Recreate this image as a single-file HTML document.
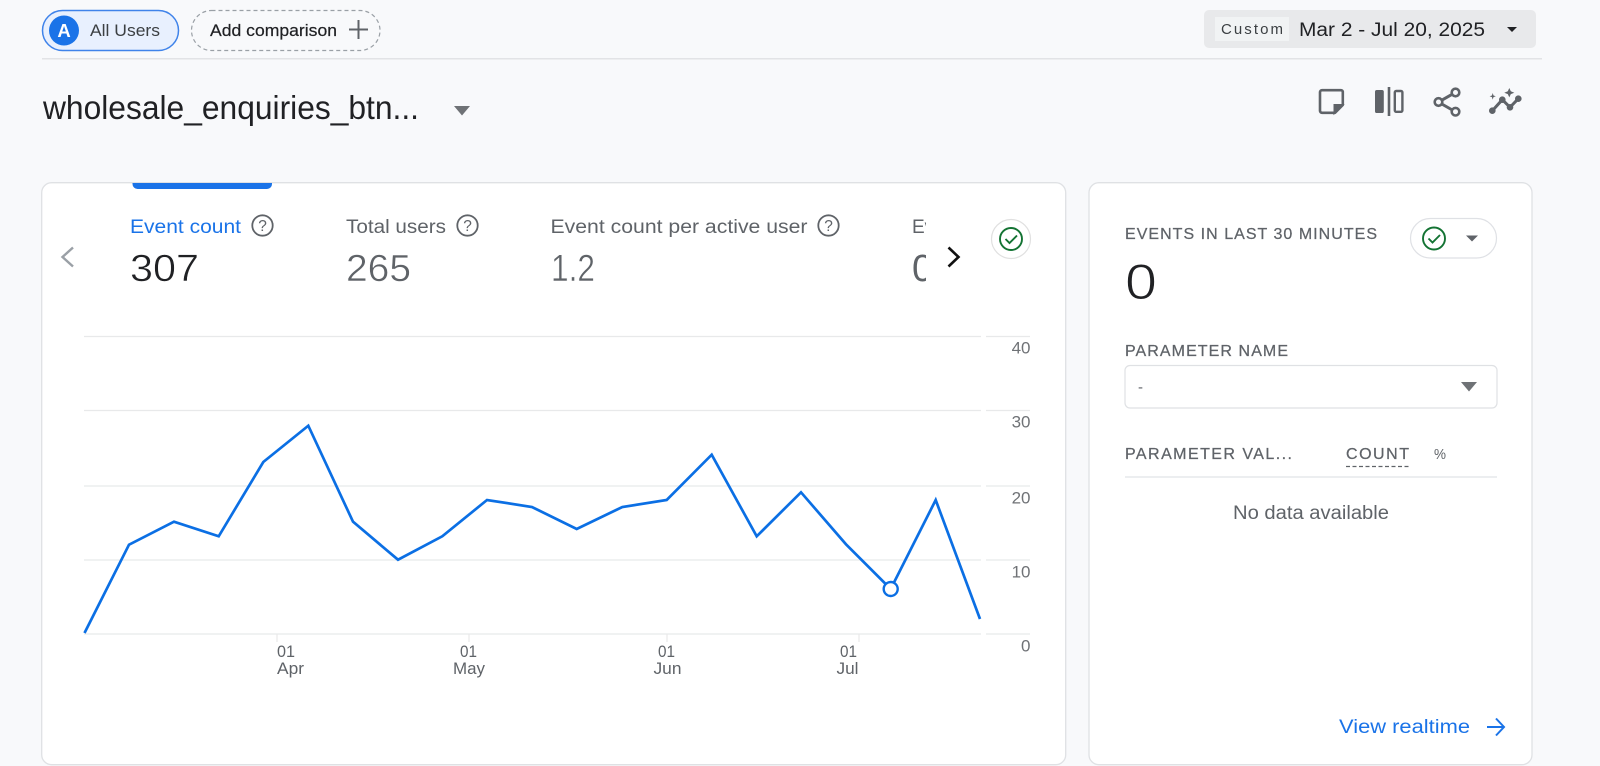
<!DOCTYPE html>
<html lang="en"><head><meta charset="utf-8"><title>Event report</title>
<style>
html,body{margin:0;padding:0;width:1600px;height:766px;overflow:hidden;background:#f8f9fb}
svg{display:block}
text{font-family:"Liberation Sans",sans-serif}
</style></head><body>
<svg xmlns="http://www.w3.org/2000/svg" width="1600" height="766" viewBox="0 0 1600 766">
<rect width="1600" height="766" fill="#f8f9fb"/>

<!-- top chips -->
<rect x="42.5" y="10.5" width="136" height="40" rx="20" fill="#e8f0fe" stroke="#3f83ea" stroke-width="1.5"/>
<circle cx="64" cy="30.5" r="15" fill="#1a73e8"/>
<text x="64" y="37" font-size="18.5" font-weight="bold" fill="#fff" text-anchor="middle">A</text>
<text x="90" y="36" font-size="17" fill="#3c4043" textLength="70" lengthAdjust="spacingAndGlyphs">All Users</text>
<rect x="191.5" y="10.5" width="188.500" height="40" rx="20" fill="none" stroke="#9aa0a6" stroke-width="1.2" stroke-dasharray="4 3"/>
<text x="210" y="36" font-size="17" fill="#202124" stroke="#202124" stroke-width=".2" textLength="127" lengthAdjust="spacingAndGlyphs">Add comparison</text>
<path d="M358.5 20v19M349 29.500h19" stroke="#5f6368" stroke-width="2" fill="none"/>

<!-- date -->
<rect x="1204" y="10" width="332" height="38" rx="5" fill="#e8e9eb"/>
<rect x="1215" y="17" width="74" height="24" fill="#f1f3f4"/>
<text x="1221" y="34" font-size="15" fill="#3c4043" textLength="62" lengthAdjust="spacing">Custom</text>
<text x="1299" y="36" font-size="19" fill="#202124" textLength="186" lengthAdjust="spacingAndGlyphs">Mar 2 - Jul 20, 2025</text>
<path d="M1507 27h10l-5 5z" fill="#202124"/>
<rect x="42" y="58" width="1500" height="1.5" fill="#e2e3e6"/>

<!-- title -->
<text x="43" y="119" font-size="33" fill="#202124" textLength="376" lengthAdjust="spacingAndGlyphs">wholesale_enquiries_btn...</text>
<path d="M454 106h16l-8 9.500z" fill="#6f7276"/>

<!-- action icons -->
<g fill="none" stroke="#5f6368" stroke-width="2.600">
<path d="M1322 90.200h19a1.800 1.800 0 0 1 1.800 1.800v13l-7.800 7.800h-13a2 2 0 0 1-2-2v-18.600a2 2 0 0 1 2-2z" stroke-linejoin="round"/>
<path d="M1343.500 104.500h-9.500v9.500z" fill="#5f6368" stroke-width="1"/>
<rect x="1394.800" y="91" width="7.600" height="20.800" rx="1.400" stroke-width="2.400"/>
<circle cx="1455.500" cy="92.500" r="3.800"/><circle cx="1455.500" cy="111.700" r="3.800"/><circle cx="1438.500" cy="102" r="3.800"/>
<path d="M1441.800 100.200l10.500-6M1441.800 104l10.500 6" stroke-width="3"/>
<path d="M1492.300 110.700l10-11 7.700 7.600 8.300-8.600" stroke-width="3"/>
</g>
<g fill="#5f6368">
<rect x="1375" y="90" width="8.800" height="23" rx="1.800"/>
<rect x="1387.700" y="87" width="2.600" height="29"/>
<circle cx="1492.300" cy="110.700" r="3.300"/><circle cx="1502.300" cy="99.700" r="3.300"/><circle cx="1510" cy="107.300" r="3.300"/><circle cx="1518.300" cy="98.700" r="3.300"/>
<path d="M1509.300 88l1.500 3.300 3.500 1.400-3.500 1.400-1.500 3.300-1.500-3.300-3.500-1.400 3.500-1.400z"/>
<path d="M1492.700 93l.8 2.500 2.300.8-2.300.8-.8 2.500-.8-2.500-2.300-.8 2.300-.8z"/>
</g>

<!-- main card -->
<rect x="41.700" y="182.700" width="1024" height="582" rx="10" fill="#fff" stroke="#dfe1e4" stroke-width="1.300"/>
<path d="M132.500 183h139.500v1a5 5 0 0 1-5 5h-129.500a5 5 0 0 1-5-5z" fill="#1a73e8"/>

<text x="130" y="233" font-size="19" fill="#1a73e8" textLength="111" lengthAdjust="spacingAndGlyphs">Event count</text>
<text x="130" y="281" font-size="38" fill="#202124" stroke="#fff" stroke-width=".5" textLength="69" lengthAdjust="spacingAndGlyphs">307</text>
<text x="346" y="233" font-size="19" fill="#5f6368" textLength="100" lengthAdjust="spacingAndGlyphs">Total users</text>
<text x="346" y="281" font-size="38" fill="#5f6368" stroke="#fff" stroke-width=".5" textLength="65" lengthAdjust="spacingAndGlyphs">265</text>
<text x="550.500" y="233" font-size="19" fill="#5f6368" textLength="257" lengthAdjust="spacingAndGlyphs">Event count per active user</text>
<text x="551" y="281" font-size="38" fill="#5f6368" stroke="#fff" stroke-width=".5" textLength="44" lengthAdjust="spacingAndGlyphs">1.2</text>
<clipPath id="c"><rect x="905" y="205" width="21" height="90"/></clipPath>
<g clip-path="url(#c)">
<text x="912" y="233" font-size="19" fill="#5f6368">Ev</text>
<text x="912" y="281" font-size="38" fill="#5f6368">0</text>
</g>
<g fill="none" stroke="#5f6368" stroke-width="1.800">
<circle cx="262.500" cy="225.500" r="10.200"/><circle cx="467.500" cy="225.500" r="10.200"/><circle cx="828.500" cy="225.500" r="10.200"/>
</g>
<g font-size="15.500" fill="#5f6368" text-anchor="middle">
<text x="262.500" y="231">?</text><text x="467.500" y="231">?</text><text x="828.500" y="231">?</text>
</g>
<path d="M73 247.500l-10.500 9.500 10.500 9.500" fill="none" stroke="#9aa0a6" stroke-width="2.400"/>
<path d="M948.500 247.500l10 9.500-10 9.500" fill="none" stroke="#111" stroke-width="2.600"/>
<circle cx="1011" cy="239" r="19.500" fill="#fff" stroke="#e0e0e0" stroke-width="1.200"/>
<circle cx="1011" cy="239" r="11" fill="none" stroke="#137333" stroke-width="1.900"/>
<path d="M1005.500 239l4 4 7.500-7.500" fill="none" stroke="#137333" stroke-width="1.900"/>

<!-- chart -->
<g stroke="#e8e9ea" stroke-width="1.200">
<path d="M84 336.500H981M986 336.500H1030M84 410.500H981M986 410.500H1030M84 486H981M986 486H1030M84 560H981M986 560H1030M84 634H981M986 634H1030"/>
<path d="M277 634v8M469 634v8M667 634v8M859 634v8"/>
</g>
<polyline fill="none" stroke="#0b6fe4" stroke-width="2.700" stroke-linejoin="miter" points="84.500,633 129,544.700 174,521.700 218.700,536.300 263.300,462 308.300,425.700 353,521.700 398,559.700 442.300,536.300 487,500 532,507 576.700,529 622.300,507 666.700,500 711.700,454.700 756.700,536.300 801,492.300 846,544.300 890.700,589 935.700,500 980,619"/>
<circle cx="890.700" cy="589" r="7" fill="#fff" stroke="#0b6fe4" stroke-width="2.400"/>
<g font-size="17" fill="#6f7276" text-anchor="end">
<text x="1030.500" y="353.500">40</text><text x="1030.500" y="427.500">30</text><text x="1030.500" y="503.500">20</text><text x="1030.500" y="577.500">10</text><text x="1030.500" y="651.500">0</text>
</g>
<g font-size="16.500" fill="#5f6368">
<text x="277" y="657" textLength="18" lengthAdjust="spacingAndGlyphs">01</text>
<text x="277" y="674" textLength="27" lengthAdjust="spacingAndGlyphs">Apr</text>
<text x="460" y="657" textLength="17" lengthAdjust="spacingAndGlyphs">01</text>
<text x="453" y="674" textLength="32" lengthAdjust="spacingAndGlyphs">May</text>
<text x="658" y="657" textLength="17" lengthAdjust="spacingAndGlyphs">01</text>
<text x="653.500" y="674" textLength="28" lengthAdjust="spacingAndGlyphs">Jun</text>
<text x="840" y="657" textLength="17" lengthAdjust="spacingAndGlyphs">01</text>
<text x="836.500" y="674" textLength="22" lengthAdjust="spacingAndGlyphs">Jul</text>
</g>

<!-- right card -->
<rect x="1089" y="182.700" width="443" height="582" rx="10" fill="#fff" stroke="#dfe1e4" stroke-width="1.300"/>
<g font-size="16" fill="#5f6368" stroke="#5f6368" stroke-width=".25">
<text x="1125" y="239" textLength="252" lengthAdjust="spacing">EVENTS IN LAST 30 MINUTES</text>
<text x="1125" y="356" textLength="163" lengthAdjust="spacing">PARAMETER NAME</text>
<text x="1125" y="459" textLength="167" lengthAdjust="spacing">PARAMETER VAL...</text>
<text x="1346" y="459" textLength="63" lengthAdjust="spacing">COUNT</text>
</g>
<text x="1125" y="299" font-size="50" fill="#202124" stroke="#fff" stroke-width="1" textLength="32" lengthAdjust="spacingAndGlyphs">0</text>
<rect x="1410.500" y="218.500" width="86" height="39.500" rx="19.700" fill="#fff" stroke="#dfe1e5" stroke-width="1.200"/>
<circle cx="1434" cy="238.500" r="11" fill="none" stroke="#137333" stroke-width="1.900"/>
<path d="M1428.500 238.500l4 4 7.500-7.500" fill="none" stroke="#137333" stroke-width="1.900"/>
<path d="M1466 235.500h12l-6 6z" fill="#5f6368"/>
<rect x="1125" y="365.500" width="372" height="42.500" rx="5" fill="#fff" stroke="#dfe1e4" stroke-width="1.200"/>
<text x="1138" y="392" font-size="15" fill="#5f6368">-</text>
<path d="M1461 382h16l-8 9.500z" fill="#6f7276"/>
<path d="M1346 466.500H1411" stroke="#5f6368" stroke-width="1.200" stroke-dasharray="4 2.500"/>
<text x="1434" y="459" font-size="15" fill="#5f6368" textLength="12" lengthAdjust="spacingAndGlyphs">%</text>
<rect x="1125" y="476.500" width="372" height="1" fill="#dadce0"/>
<text x="1233" y="519" font-size="19" fill="#5f6368" textLength="156" lengthAdjust="spacingAndGlyphs">No data available</text>
<text x="1339" y="733" font-size="19" fill="#1a73e8" textLength="131" lengthAdjust="spacingAndGlyphs">View realtime</text>
<path d="M1487 727h16M1496 718.500l8 8.500-8 8.500" fill="none" stroke="#1a73e8" stroke-width="2"/>
</svg>
</body></html>
